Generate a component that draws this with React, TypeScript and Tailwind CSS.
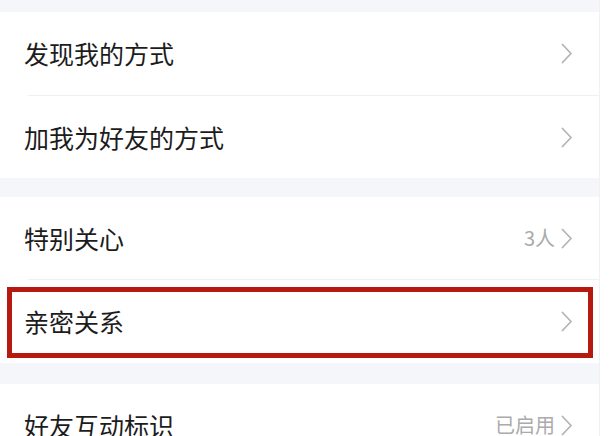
const font = { fontFamily: '"Noto Sans CJK SC", "Noto Sans", sans-serif' };

function Chevron() {
  return (
    <svg width="12" height="21" viewBox="0 0 12 21" fill="none" className="shrink-0">
      <polyline points="1.5,1.5 10,10.5 1.5,19.5" stroke="#b4b4b4" strokeWidth="1.8" strokeLinecap="round" strokeLinejoin="round" />
    </svg>
  );
}

function Row({ label, value, className = "" }: { label: string; value?: string; className?: string }) {
  return (
    <div className={`flex items-center justify-between bg-white pl-[24px] pr-[26px] ${className}`}>
      <span className="text-[25px] leading-none text-[#1c1c1c]">{label}</span>
      <div className="flex items-center gap-[6px] text-[20px] leading-none text-[#ababab]">
        {value && <span>{value}</span>}
        <Chevron />
      </div>
    </div>
  );
}

export default function App() {
  return (
    <div className="relative flex h-[436px] w-[613px] overflow-hidden bg-white" style={font}>
      <div className="flex w-[600px] flex-col border-r border-[#f1f1f4] bg-[#f5f6fa]">
        <div className="h-[12px] shrink-0" />
        <Row label="发现我的方式" className="h-[83px] shrink-0" />
        <div className="flex h-px shrink-0 bg-white pl-[28px]">
          <div className="flex-1 bg-[#f0f0f2]" />
        </div>
        <Row label="加我为好友的方式" className="h-[82px] shrink-0" />
        <div className="h-[19px] shrink-0" />
        <Row label="特别关心" value="3人" className="h-[82px] shrink-0" />
        <div className="flex h-px shrink-0 bg-white pl-[28px]">
          <div className="flex-1 bg-[#f0f0f2]" />
        </div>
        <Row label="亲密关系" className="h-[83px] shrink-0" />
        <div className="h-[21px] shrink-0" />
        <Row label="好友互动标识" value="已启用" className="h-[82px] shrink-0" />
      </div>
      <div className="pointer-events-none absolute left-[7px] top-[287px] h-[71px] w-[586px] border-[5px] border-[#b5190f]" />
    </div>
  );
}
